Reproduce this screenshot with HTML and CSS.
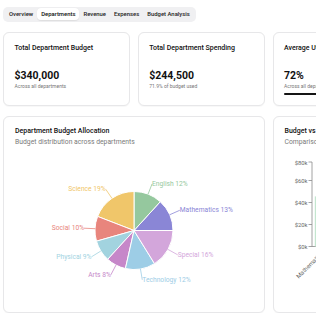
FILE: index.html
```html
<!DOCTYPE html>
<html lang="en">
<head>
<meta charset="utf-8">
<title>Departments</title>
<link rel="stylesheet" href="styles.css">
</head>
<body>
<div class="page">
  <div class="tabs">
    <span class="tab">Overview</span>
    <span class="tab active">Departments</span>
    <span class="tab">Revenue</span>
    <span class="tab">Expenses</span>
    <span class="tab">Budget Analysis</span>
  </div>

  <div class="stats">
    <div class="card stat">
      <div class="stat-title">Total Department Budget</div>
      <div class="stat-value">$340,000</div>
      <div class="stat-sub">Across all departments</div>
    </div>
    <div class="card stat">
      <div class="stat-title">Total Department Spending</div>
      <div class="stat-value">$244,500</div>
      <div class="stat-sub">71.9% of budget used</div>
    </div>
    <div class="card stat">
      <div class="stat-title">Average Utilization</div>
      <div class="stat-value">72%</div>
      <div class="stat-sub">Across all departments</div>
      <div class="progress"><div class="progress-fill" style="width:72%"></div></div>
    </div>
    <div class="card stat">
      <div class="stat-title">Departments Over 80%</div>
      <div class="stat-value">3</div>
      <div class="stat-sub">Need budget review</div>
    </div>
  </div>

  <div class="charts">
    <div class="card chart-card">
      <div class="chart-title">Department Budget Allocation</div>
      <div class="chart-sub">Budget distribution across departments</div>
      <svg class="chart-svg" xmlns="http://www.w3.org/2000/svg">
        <g class="slices">
          <path fill="#8a86d6" d="M119,83.5 L158,83.5 A39,39 0 0 0 145.27,54.68 Z"/>
          <path fill="#95c89e" d="M119,83.5 L145.27,54.68 A39,39 0 0 0 119,44.5 Z"/>
          <path fill="#f0c66a" d="M119,83.5 L119,44.5 A39,39 0 0 0 82.63,69.41 Z"/>
          <path fill="#e8857d" d="M119,83.5 L82.63,69.41 A39,39 0 0 0 81.49,94.17 Z"/>
          <path fill="#a2d3df" d="M119,83.5 L81.49,94.17 A39,39 0 0 0 92.73,112.32 Z"/>
          <path fill="#c687c9" d="M119,83.5 L92.73,112.32 A39,39 0 0 0 110.42,121.54 Z"/>
          <path fill="#9dcde6" d="M119,83.5 L110.42,121.54 A39,39 0 0 0 139.53,116.66 Z"/>
          <path fill="#d3a6db" d="M119,83.5 L139.53,116.66 A39,39 0 0 0 158,83.5 Z"/>
        </g>
        <g class="leaders">
          <line stroke="#8a86d6" x1="154.68" y1="67.75" x2="164.74" y2="63.31"/>
          <line stroke="#95c89e" x1="133.09" y1="47.13" x2="137.07" y2="36.88"/>
          <line stroke="#f0c66a" x1="96.96" y1="51.33" x2="90.74" y2="42.26"/>
          <line stroke="#e8857d" x1="80.04" y1="81.70" x2="69.05" y2="81.19"/>
          <line stroke="#a2d3df" x1="85.84" y1="104.03" x2="76.49" y2="109.83"/>
          <line stroke="#c687c9" x1="100.97" y1="118.09" x2="95.89" y2="127.84"/>
          <line stroke="#9dcde6" x1="125.46" y1="121.96" x2="127.28" y2="132.81"/>
          <line stroke="#d3a6db" x1="153.08" y1="102.47" x2="162.69" y2="107.82"/>
        </g>
        <g class="pie-labels">
          <text fill="#8a86d6" x="164.74" y="63.31" text-anchor="start">Mathematics 13%</text>
          <text fill="#95c89e" x="137.07" y="36.88" text-anchor="start">English 12%</text>
          <text fill="#f0c66a" x="90.74" y="42.26" text-anchor="end">Science 19%</text>
          <text fill="#e8857d" x="69.05" y="81.19" text-anchor="end">Social 10%</text>
          <text fill="#a2d3df" x="76.49" y="109.83" text-anchor="end">Physical 9%</text>
          <text fill="#c687c9" x="95.89" y="127.84" text-anchor="end">Arts 8%</text>
          <text fill="#9dcde6" x="127.28" y="132.81" text-anchor="start">Technology 12%</text>
          <text fill="#d3a6db" x="162.69" y="107.82" text-anchor="start">Special 16%</text>
        </g>
      </svg>
    </div>
    <div class="card chart-card">
      <div class="chart-title">Budget vs Actual Spending</div>
      <div class="chart-sub">Comparison of budget and spending by department</div>
      <svg class="chart-svg" xmlns="http://www.w3.org/2000/svg">
        <g class="axis">
          <line x1="27" y1="15" x2="27" y2="99.5"/>
          <line x1="27" y1="99.5" x2="240" y2="99.5"/>
          <line x1="23.5" y1="15" x2="27" y2="15"/>
          <line x1="23.5" y1="33.5" x2="27" y2="33.5"/>
          <line x1="23.5" y1="55.5" x2="27" y2="55.5"/>
          <line x1="23.5" y1="77.5" x2="27" y2="77.5"/>
          <line x1="23.5" y1="99.5" x2="27" y2="99.5"/>
        </g>
        <g class="axis-labels">
          <text x="22.5" y="15.5">$80k</text>
          <text x="22.5" y="34">$60k</text>
          <text x="22.5" y="56">$40k</text>
          <text x="22.5" y="78">$20k</text>
          <text x="22.5" y="100">$0k</text>
        </g>
        <rect class="bar-budget" x="29.8" y="49.4" width="16" height="50.1"/>
        <rect class="bar-spent" x="46.8" y="58" width="16" height="41.5"/>
        <text class="x-label" transform="translate(38.5,107) rotate(-45)">Mathematics</text>
      </svg>
    </div>
  </div>
</div>
</body>
</html>
```

FILE: styles.css
```css
html, body {
  margin: 0;
  padding: 0;
  background: #ffffff;
  overflow: hidden;
}

body {
  font-family: Roboto, "Liberation Sans", Arial, sans-serif;
  color: #111111;
  font-size: 7px;
  line-height: 1.2;
}

.page {
  width: 531px;
  padding: 6.5px 0 0 3px;
}

.tabs {
  display: flex;
  width: fit-content;
  align-items: center;
  height: 15px;
  box-sizing: border-box;
  padding: 1.5px 2px;
  background: #f0f0f2;
  border-radius: 5px;
}

.tab {
  font-size: 5.9px;
  font-weight: 500;
  line-height: 12px;
  padding: 0 4px;
  border-radius: 4px;
  color: #222222;
  white-space: nowrap;
}

.tab.active {
  background: #ffffff;
  color: #111111;
  box-shadow: 0 0.5px 1px rgba(0, 0, 0, 0.08);
}

.stats {
  display: grid;
  grid-template-columns: repeat(4, 1fr);
  gap: 8px;
  margin-top: 10.5px;
}

.card {
  background: #ffffff;
  border: 1px solid #e7e7e9;
  border-radius: 6px;
  box-shadow: 0 0.5px 1px rgba(0, 0, 0, 0.03);
  min-width: 0;
}

.stat {
  padding: 10px 10.5px 10px;
  white-space: nowrap;
  overflow: hidden;
}

.stat-title {
  font-size: 7px;
  font-weight: 500;
  line-height: 10px;
  color: #111111;
}

.stat-value {
  font-size: 10.5px;
  font-weight: 700;
  line-height: 14px;
  margin-top: 16.3px;
  color: #111111;
}

.stat-sub {
  font-size: 5px;
  line-height: 7px;
  color: #777777;
}

.progress {
  height: 2px;
  margin-top: 2.5px;
  background: #e4e4e7;
  border-radius: 1px;
  overflow: hidden;
}

.progress-fill {
  height: 100%;
  background: #151515;
}

.charts {
  display: grid;
  grid-template-columns: repeat(2, 1fr);
  gap: 8px;
  margin-top: 10.5px;
}

.chart-card {
  padding: 9.5px 11px 10.5px;
  overflow: hidden;
}

.chart-title {
  font-size: 7px;
  font-weight: 500;
  line-height: 9px;
  white-space: nowrap;
  color: #111111;
}

.chart-sub {
  font-size: 6.8px;
  line-height: 9px;
  margin-top: 2px;
  color: #7a7a7a;
  white-space: nowrap;
}

.chart-svg {
  display: block;
  width: 100%;
  height: 155px;
  overflow: visible;
}

.slices path {
  stroke: #ffffff;
  stroke-width: 1;
}

.leaders line {
  stroke-width: 0.8;
}

.pie-labels text {
  font-size: 6.7px;
  dominant-baseline: central;
}

.axis line {
  stroke: #8a8a8a;
  stroke-width: 0.8;
}

.axis-labels text {
  font-size: 5.8px;
  fill: #666666;
  text-anchor: end;
  dominant-baseline: central;
}

.bar-budget {
  fill: #c4e6cf;
}

.bar-spent {
  fill: #8884d8;
}

.x-label {
  font-size: 6px;
  fill: #666666;
  text-anchor: end;
}
```
